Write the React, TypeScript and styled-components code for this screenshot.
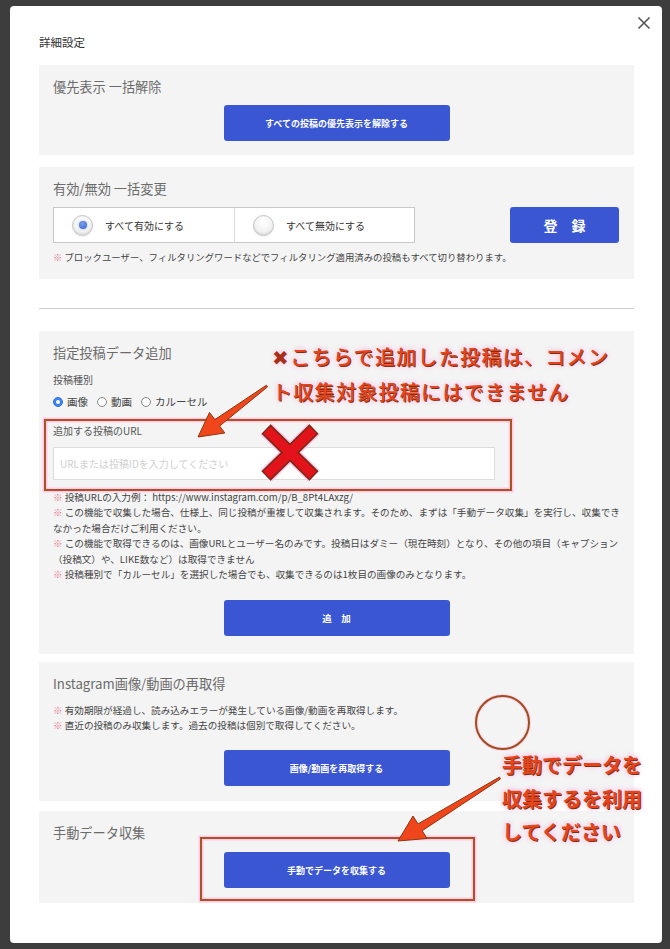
import React from "react";
import styled, { createGlobalStyle } from "styled-components";

const GlobalStyle = createGlobalStyle`
  html, body { margin: 0; padding: 0; background: #3d3d3d; }
  body { font-family: "Noto Sans CJK JP", "Noto Sans", sans-serif; }
  * { box-sizing: border-box; }
`;

const Page = styled.div`
  width: 670px;
  height: 949px;
  padding: 6px 0 0 10px;
  background: #3d3d3d;
  overflow: hidden;
`;

const Modal = styled.div`
  position: relative;
  width: 652px;
  height: 937px;
  background: #fff;
  border-radius: 4px;
  padding: 28px 28px 0 29px;
`;

const Title = styled.h1`
  margin: 0 0 15px;
  font-size: 11.5px;
  line-height: 16px;
  font-weight: 400;
  color: #333;
`;

const Close = styled.button`
  position: absolute;
  top: 10px;
  right: 11px;
  width: 14px;
  height: 14px;
  padding: 0;
  border: none;
  background: transparent;
  display: flex;
`;

const Section = styled.section<{ $mt: number; $pb: number }>`
  margin-top: ${(p) => p.$mt}px;
  padding: 12px 14px ${(p) => p.$pb}px;
  background: #f4f4f4;
`;

const SectionTitle = styled.h2`
  margin: 0;
  font-size: 13.2px;
  line-height: 20px;
  font-weight: 400;
  color: #6b6b6b;
  white-space: nowrap;
`;

const Primary = styled.button<{ $mt: number; $size?: number }>`
  display: flex;
  align-items: center;
  justify-content: center;
  margin: ${(p) => p.$mt}px auto 0;
  width: 226px;
  height: 36px;
  border: none;
  border-radius: 3px;
  background: #3a56d3;
  color: #fff;
  font-family: inherit;
  font-weight: 700;
  font-size: ${(p) => p.$size ?? 9}px;
  white-space: nowrap;
`;

const Row = styled.div`
  margin-top: 8px;
  display: flex;
  justify-content: space-between;
  align-items: center;
  padding-right: 1px;
`;

const RadioGroup = styled.div`
  width: 362px;
  height: 36px;
  border: 1px solid #c9c9c9;
  background: #fff;
  display: grid;
  grid-template-columns: 180px 1fr;
`;

const BigOption = styled.label<{ $divider?: boolean }>`
  display: flex;
  align-items: center;
  gap: 12px;
  padding-left: 18px;
  font-size: 10px;
  color: #333;
  border-left: ${(p) => (p.$divider ? "1px solid #ddd" : "none")};
`;

const BigRadio = styled.span<{ $checked?: boolean }>`
  width: 21px;
  height: 21px;
  border-radius: 50%;
  border: 1px solid #c4c4c4;
  background: radial-gradient(circle at 50% 35%, #ffffff 0%, #f3f3f3 55%, #dcdcdc 100%);
  box-shadow: inset 0 -1px 2px rgba(0, 0, 0, 0.08), 0 1px 1px rgba(0, 0, 0, 0.06);
  display: flex;
  align-items: center;
  justify-content: center;
  &::after {
    content: "";
    width: 8px;
    height: 8px;
    border-radius: 50%;
    background: radial-gradient(circle at 40% 35%, #7aa0ee, #3462cc);
    box-shadow: 0 0 2px rgba(60, 100, 210, 0.6);
    display: ${(p) => (p.$checked ? "block" : "none")};
  }
`;

const Register = styled.button`
  width: 109px;
  height: 36px;
  border: none;
  border-radius: 3px;
  background: #3a56d3;
  color: #fff;
  font-family: inherit;
  font-size: 14px;
  font-weight: 700;
`;

const Note = styled.p<{ $mt?: number; $lh?: number; $size?: number }>`
  margin: ${(p) => p.$mt ?? 0}px 0 0;
  font-size: ${(p) => p.$size ?? 9.6}px;
  line-height: ${(p) => p.$lh ?? 15.4}px;
  color: #444;
  white-space: nowrap;
`;

const Mark = styled.span`
  color: #e4788f;
`;

const Divider = styled.hr`
  margin: 29px 0 0;
  border: none;
  height: 1px;
  background: #cfcfcf;
`;

const Label = styled.div<{ $mt: number }>`
  margin-top: ${(p) => p.$mt}px;
  font-size: 10px;
  line-height: 16px;
  color: #555;
`;

const TypeRow = styled.div`
  margin-top: 6px;
  display: flex;
  align-items: center;
  gap: 9px;
  font-size: 10.5px;
  line-height: 16px;
  color: #444;
`;

const SmallOption = styled.label`
  display: flex;
  align-items: center;
  gap: 4px;
`;

const SmallRadio = styled.span<{ $checked?: boolean }>`
  width: 10px;
  height: 10px;
  border-radius: 50%;
  border: 1px solid ${(p) => (p.$checked ? "#2f74e6" : "#8a8a8a")};
  background: ${(p) => (p.$checked ? "#3b82f0" : "#fff")};
  display: flex;
  align-items: center;
  justify-content: center;
  &::after {
    content: "";
    width: 4px;
    height: 4px;
    border-radius: 50%;
    background: #fff;
    display: ${(p) => (p.$checked ? "block" : "none")};
  }
`;

const UrlInput = styled.input`
  display: block;
  margin-top: 8px;
  width: 442px;
  height: 33px;
  border: 1px solid #dcdcdc;
  background: #fff;
  padding: 0 6px;
  font-family: inherit;
  font-size: 10px;
  &::placeholder {
    color: #d0d0d0;
  }
`;

const Overlay = styled.svg`
  position: absolute;
  left: 0;
  top: 0;
  width: 652px;
  height: 937px;
  pointer-events: none;
`;

const AnnoText = styled.div<{ $weight: number }>`
  position: absolute;
  font-size: 20px;
  font-weight: ${(p) => p.$weight};
  color: #e5441c;
  white-space: nowrap;
  text-shadow: 1px 1px 0 #7d300d, 0 0 2px #fff, 0 0 4px #ffb0e0, 0 0 6px #ffc4ea;
  pointer-events: none;
`;

const AnnoTop = styled(AnnoText)`
  left: 262px;
  top: 333px;
  line-height: 35px;
  letter-spacing: 1.3px;
`;

const AnnoRight = styled(AnnoText)`
  left: 492px;
  top: 742px;
  line-height: 33.5px;
`;

const Cross = styled.span`
  color: #a8301a;
  text-shadow: 0 0 2px #fff, 0 0 4px #ffb0e0;
`;

export default function App() {
  return (
    <Page>
      <GlobalStyle />
      <Modal>
        <Close aria-label="close">
          <svg width="14" height="14" viewBox="0 0 14 14">
            <path d="M1.5 1.5 L12.5 12.5 M12.5 1.5 L1.5 12.5" stroke="#555" strokeWidth="1.6" />
          </svg>
        </Close>
        <Title>詳細設定</Title>

        <Section $mt={0} $pb={14}>
          <SectionTitle>優先表示 一括解除</SectionTitle>
          <Primary $mt={8}>すべての投稿の優先表示を解除する</Primary>
        </Section>

        <Section $mt={12} $pb={15}>
          <SectionTitle>有効/無効 一括変更</SectionTitle>
          <Row>
            <RadioGroup>
              <BigOption>
                <BigRadio $checked />
                すべて有効にする
              </BigOption>
              <BigOption $divider>
                <BigRadio />
                すべて無効にする
              </BigOption>
            </RadioGroup>
            <Register>登　録</Register>
          </Row>
          <Note $mt={7} $lh={14} $size={9.4}>
            <Mark>※</Mark> ブロックユーザー、フィルタリングワードなどでフィルタリング適用済みの投稿もすべて切り替わります。
          </Note>
        </Section>

        <Divider />

        <Section $mt={22} $pb={18}>
          <SectionTitle>指定投稿データ追加</SectionTitle>
          <Label $mt={9}>投稿種別</Label>
          <TypeRow>
            <SmallOption>
              <SmallRadio $checked />
              画像
            </SmallOption>
            <SmallOption>
              <SmallRadio />
              動画
            </SmallOption>
            <SmallOption>
              <SmallRadio />
              カルーセル
            </SmallOption>
          </TypeRow>
          <Label $mt={13}>追加する投稿のURL</Label>
          <UrlInput placeholder="URLまたは投稿IDを入力してください" />
          <Note $mt={10}>
            <Mark>※</Mark> 投稿URLの入力例： https://www.instagram.com/p/B_8Pt4LAxzg/
          </Note>
          <Note>
            <Mark>※</Mark> この機能で収集した場合、仕様上、同じ投稿が重複して収集されます。そのため、まずは「手動データ収集」を実行し、収集でき
            <br />
            なかった場合だけご利用ください。
          </Note>
          <Note>
            <Mark>※</Mark> この機能で取得できるのは、画像URLとユーザー名のみです。投稿日はダミー（現在時刻）となり、その他の項目（キャプション
            <br />
            （投稿文）や、LIKE数など）は取得できません
          </Note>
          <Note>
            <Mark>※</Mark> 投稿種別で「カルーセル」を選択した場合でも、収集できるのは1枚目の画像のみとなります。
          </Note>
          <Primary $mt={18} $size={9.5}>追　加</Primary>
        </Section>

        <Section $mt={8} $pb={15}>
          <SectionTitle>Instagram画像/動画の再取得</SectionTitle>
          <Note $mt={9} $lh={15}>
            <Mark>※</Mark> 有効期限が経過し、読み込みエラーが発生している画像/動画を再取得します。
          </Note>
          <Note $lh={15}>
            <Mark>※</Mark> 直近の投稿のみ収集します。過去の投稿は個別で取得してください。
          </Note>
          <Primary $mt={17}>画像/動画を再取得する</Primary>
        </Section>

        <Section $mt={10} $pb={15}>
          <SectionTitle>手動データ収集</SectionTitle>
          <Primary $mt={9}>手動でデータを収集する</Primary>
        </Section>

        <Overlay viewBox="0 0 652 937">
          {/* highlight boxes */}
          <rect x="35" y="414" width="466" height="70" fill="none" stroke="#ffc8ec" strokeWidth="5" />
          <rect x="35" y="414" width="466" height="70" fill="none" stroke="#a9561d" strokeWidth="2" />
          <rect x="191" y="832" width="273" height="62" fill="none" stroke="#ffc8ec" strokeWidth="5" />
          <rect x="191" y="832" width="273" height="62" fill="none" stroke="#a9561d" strokeWidth="2" />
          {/* circle */}
          <circle cx="492.5" cy="716.5" r="26.5" fill="none" stroke="#ffd2ef" strokeWidth="4" />
          <circle cx="492.5" cy="716.5" r="26.5" fill="none" stroke="#9c5019" strokeWidth="2" />
          {/* big X */}
          <g>
            <path d="M256 423 L304 470 M304 423 L256 470" stroke="#ffc2ea" strokeWidth="16" />
            <path d="M256 423 L304 470 M304 423 L256 470" stroke="#7a2a10" strokeWidth="13" />
            <path d="M257 424 L303 469 M303 424 L257 469" stroke="#e3131c" strokeWidth="10" />
          </g>
          {/* arrow 1 */}
          <polygon
            points="257.6,380.8 209.6,420 214.8,427 188,431 199.5,406.5 204.9,413.6 256.4,379.2"
            fill="#f0461c"
            stroke="#8f3510"
            strokeWidth="1"
            strokeLinejoin="round"
          />
          {/* arrow 2 */}
          <polygon
            points="490.5,772.9 412.2,824.7 417,832.5 388,835 403,810 408,817.9 489.5,771.1"
            fill="#f0461c"
            stroke="#8f3510"
            strokeWidth="1"
            strokeLinejoin="round"
          />
        </Overlay>

        <AnnoTop $weight={500}>
          <Cross>✖</Cross>こちらで追加した投稿は、コメン
          <br />
          ト収集対象投稿にはできません
        </AnnoTop>
        <AnnoRight $weight={700}>
          手動でデータを
          <br />
          収集するを利用
          <br />
          してください
        </AnnoRight>
      </Modal>
    </Page>
  );
}
